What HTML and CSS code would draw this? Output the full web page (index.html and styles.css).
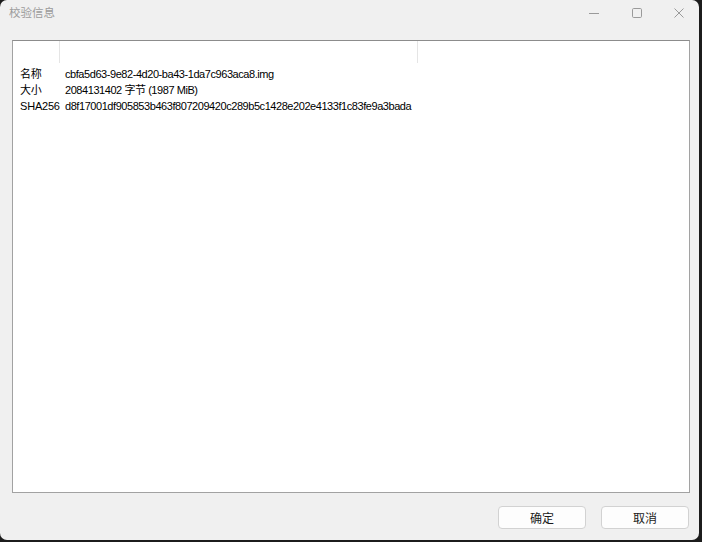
FILE: index.html
```html
<!DOCTYPE html>
<html lang="zh-CN">
<head>
<meta charset="utf-8">
<title>校验信息</title>
<link rel="stylesheet" href="styles.css">
</head>
<body>
<div class="window">
  <div class="titlebar">
    <div class="title">校验信息</div>
    <div class="controls">
      <span class="ctl">
        <svg width="12" height="12" viewBox="0 0 12 12"><path d="M1 6.5H11" stroke="#9a9a9a" stroke-width="1"/></svg>
      </span>
      <span class="ctl">
        <svg width="12" height="12" viewBox="0 0 12 12"><rect x="1.5" y="1.5" width="9" height="9" rx="1.2" fill="none" stroke="#9a9a9a" stroke-width="1"/></svg>
      </span>
      <span class="ctl last">
        <svg width="12" height="12" viewBox="0 0 12 12"><path d="M1.5 1.5L10.5 10.5M10.5 1.5L1.5 10.5" stroke="#9a9a9a" stroke-width="1"/></svg>
      </span>
    </div>
  </div>
  <div class="body">
    <div class="list">
      <div class="header">
        <div class="hcell c1"></div>
        <div class="hcell c2"></div>
        <div class="hcell c3"></div>
      </div>
      <div class="rows">
        <div class="row"><span class="k">名称</span><span class="v">cbfa5d63-9e82-4d20-ba43-1da7c963aca8.img</span></div>
        <div class="row"><span class="k">大小</span><span class="v">2084131402 字节 (1987 MiB)</span></div>
        <div class="row"><span class="k">SHA256</span><span class="v">d8f17001df905853b463f807209420c289b5c1428e202e4133f1c83fe9a3bada</span></div>
      </div>
    </div>
    <div class="buttons">
      <button class="btn">确定</button>
      <button class="btn">取消</button>
    </div>
  </div>
</div>
</body>
</html>
```
FILE: styles.css
```css
html, body {
  margin: 0;
  padding: 0;
  width: 702px;
  height: 542px;
  background: #1c1c1c;
  overflow: hidden;
}
.window {
  width: 699px;
  height: 540px;
  background: #f0f0f0;
  border-radius: 7px;
  display: flex;
  flex-direction: column;
  font-family: "Liberation Sans", "Noto Sans CJK SC", sans-serif;
  font-size: 12px;
  color: #000;
}
.titlebar {
  height: 30px;
  display: flex;
  align-items: center;
  justify-content: space-between;
}
.title {
  padding-left: 9px;
  color: #9b9b9b;
  font-family: "Noto Sans CJK SC", sans-serif;
  font-size: 11.5px;
  margin-top: -6px;
}
.controls {
  display: flex;
  margin-top: -5px;
}
.ctl {
  width: 43px;
  display: flex;
  justify-content: center;
}
.ctl.last {
  width: 41px;
}
.body {
  flex: 1;
  display: flex;
  flex-direction: column;
  padding: 10px 9px 11px 12px;
}
.list {
  flex: 1;
  background: #fff;
  border: 1px solid #a2a2a2;
  border-top-color: #8c8c8c;
  display: flex;
  flex-direction: column;
}
.header {
  height: 22px;
  display: flex;
}
.hcell {
  border-right: 1px solid #e5e5e5;
}
.c1 { width: 46px; }
.c2 { width: 357px; }
.c3 { border-right: none; flex: 1; }
.rows {
  padding-top: 3px;
}
.row {
  height: 16px;
  line-height: 16px;
  display: flex;
  white-space: nowrap;
}
.k {
  width: 45px;
  padding-left: 7px;
  box-sizing: border-box;
  letter-spacing: -0.2px;
}
.row .k, .row .v {
  font-size: 11px;
}
.v {
  padding-left: 7px;
  letter-spacing: -0.44px;
}
.buttons {
  height: 36px;
  box-sizing: border-box;
  display: flex;
  justify-content: flex-end;
  align-items: flex-start;
  gap: 15px;
  padding-top: 13px;
  padding-right: 1px;
}
.btn {
  width: 88px;
  height: 23px;
  background: #fdfdfd;
  border: 1px solid #d2d2d2;
  border-radius: 4px;
  font-family: "Noto Sans CJK SC", sans-serif;
  font-size: 12px;
  color: #1a1a1a;
  padding: 0;
  box-sizing: border-box;
  line-height: 20px;
}
```
